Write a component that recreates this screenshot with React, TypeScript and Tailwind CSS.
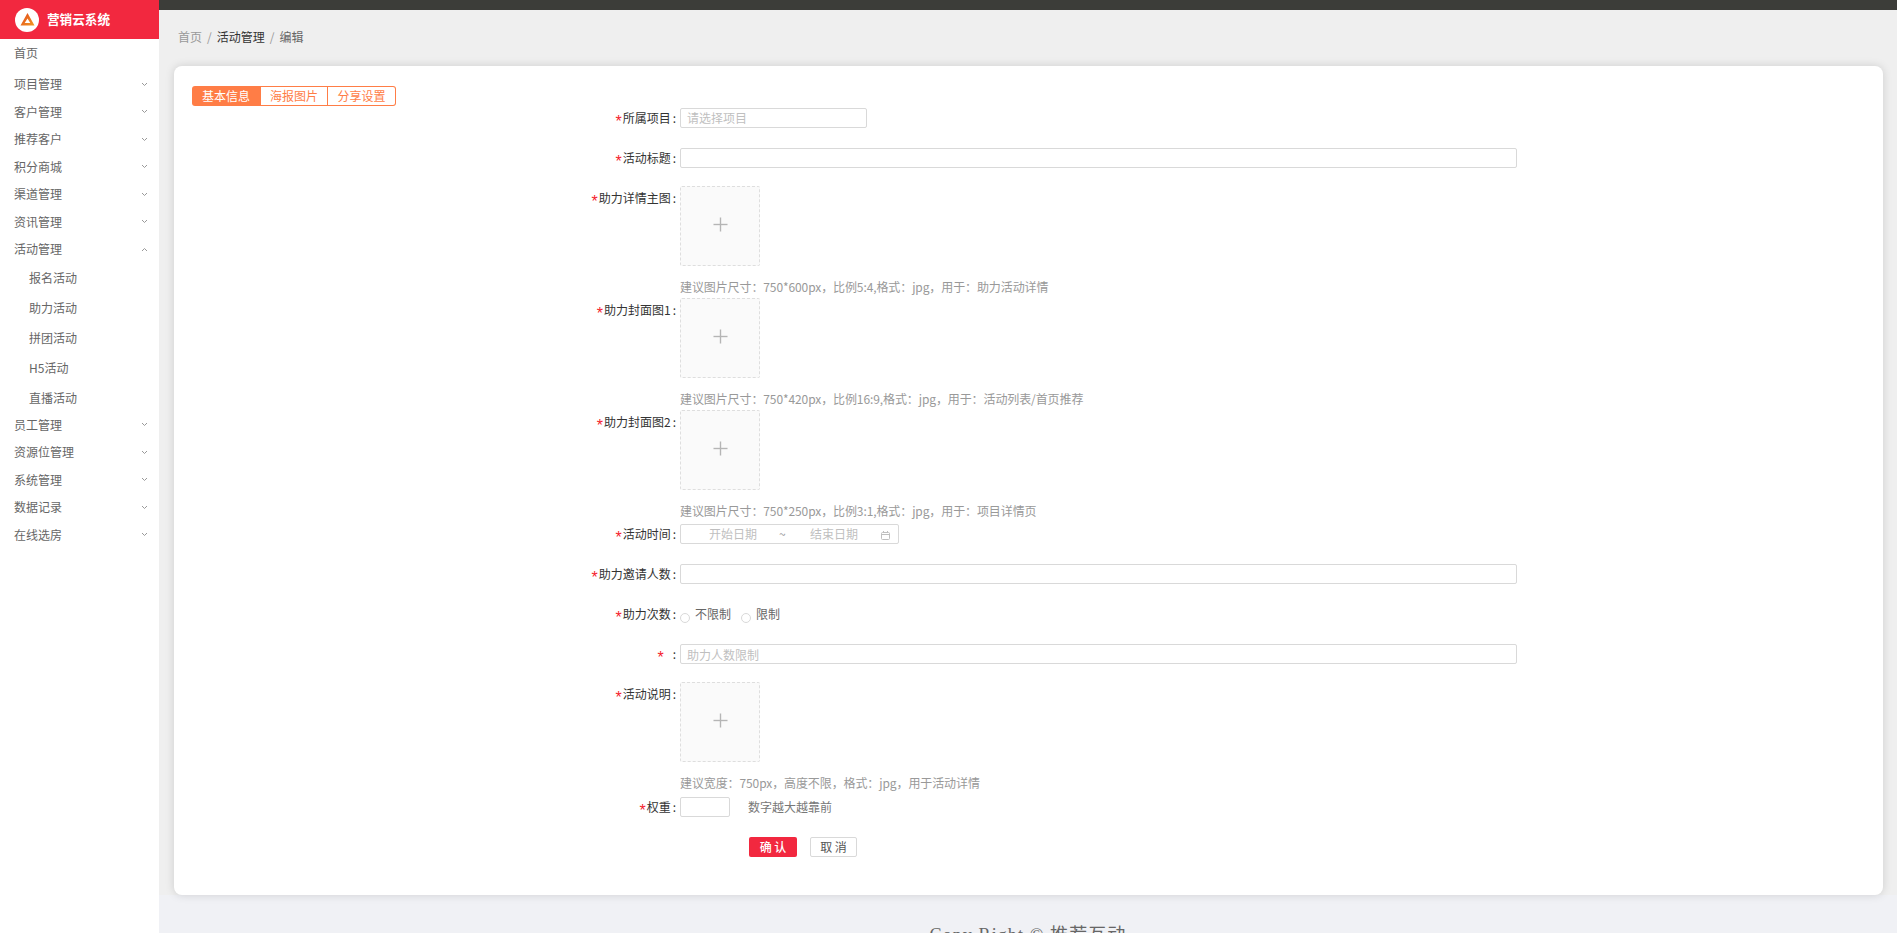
import React from 'react';

const Chevron = ({ up = false }: { up?: boolean }) => (
  <svg width="7" height="5" viewBox="0 0 7 5" className="shrink-0 mr-[11px]" fill="none" stroke="#999" strokeWidth="1">
    {up ? <polyline points="1,4 3.5,1.5 6,4" /> : <polyline points="1,1 3.5,3.5 6,1" />}
  </svg>
);

const MenuItem = ({ text, up }: { text: string; up?: boolean }) => (
  <div className="h-[27.5px] flex items-center justify-between pl-[14px] text-[#666]">
    <span>{text}</span>
    <Chevron up={up} />
  </div>
);

const SubItem = ({ text }: { text: string }) => (
  <div className="h-[30px] flex items-center pl-[29px] text-[#666]">{text}</div>
);

const Star = ({ className }: { className?: string }) => (
  <span className={`text-[#f5222d] text-[16px] leading-none relative top-[4px] [font-family:'Liberation_Sans',sans-serif] ${className ?? ''}`}>*</span>
);

const Label = ({ text, tall }: { text: string; tall?: boolean }) => (
  <div className={`w-[106px] shrink-0 pr-[4px] text-right text-[#333] whitespace-nowrap ${tall ? 'leading-[24px]' : 'leading-[20px]'}`}>
    <Star className="mr-[1px]" />
    {text}
    <span className="ml-[2px]">:</span>
  </div>
);

const Upload = () => (
  <div className="w-[80px] h-[80px] pb-[3px] border border-dashed border-[#dedede] rounded-[2px] bg-[#fafafa] flex items-center justify-center">
    <svg width="15" height="15" viewBox="0 0 15 15" stroke="#b5b5b5" strokeWidth="1.4">
      <line x1="0.5" y1="7.5" x2="14.5" y2="7.5" />
      <line x1="7.5" y1="0.5" x2="7.5" y2="14.5" />
    </svg>
  </div>
);

const UploadBlock = ({ label, hint, className }: { label: string; hint: string; className?: string }) => (
  <div className={`flex items-start ${className ?? ''}`}>
    <Label text={label} tall />
    <div className="w-[837px]">
      <Upload />
      <div className="mt-[10px] leading-[22px] text-[#999] tracking-[-0.1px] whitespace-nowrap">{hint}</div>
    </div>
  </div>
);

const Box = ({ className, placeholder }: { className: string; placeholder?: string }) => (
  <div className={`h-5 border border-[#d9d9d9] rounded-[2px] bg-white flex items-center pl-[6px] text-[#bfbfbf] ${className}`}>
    {placeholder}
  </div>
);

export default function App() {
  return (
    <div className="flex h-[933px] w-full overflow-hidden text-xs [font-family:'Noto_Sans_CJK_SC',sans-serif]">
      <aside className="w-[159px] shrink-0 bg-white">
        <div className="h-[39px] bg-[#f2283f] flex items-center pl-[15px]">
          <svg width="24" height="24" viewBox="0 0 24 24" className="shrink-0">
            <defs>
              <linearGradient id="lg" x1="0" y1="0" x2="1" y2="1">
                <stop offset="0" stopColor="#e0441c" />
                <stop offset="1" stopColor="#f39a22" />
              </linearGradient>
            </defs>
            <circle cx="12" cy="12" r="12" fill="#fff" />
            <path d="M12.5 5 L19.5 17.5 H5.5 Z M12.5 10.5 L9.7 15 H15.3 Z" fill="url(#lg)" fillRule="evenodd" />
          </svg>
          <span className="ml-[8px] text-[12.6px] font-bold text-white whitespace-nowrap">营销云系统</span>
        </div>
        <div className="h-[28px] mb-[3.5px] flex items-center pl-[14px] text-[#666]">首页</div>
        <MenuItem text="项目管理" />
        <MenuItem text="客户管理" />
        <MenuItem text="推荐客户" />
        <MenuItem text="积分商城" />
        <MenuItem text="渠道管理" />
        <MenuItem text="资讯管理" />
        <MenuItem text="活动管理" up />
        <SubItem text="报名活动" />
        <SubItem text="助力活动" />
        <SubItem text="拼团活动" />
        <SubItem text="H5活动" />
        <SubItem text="直播活动" />
        <div className="-mt-[2px]">
          <MenuItem text="员工管理" />
          <MenuItem text="资源位管理" />
          <MenuItem text="系统管理" />
          <MenuItem text="数据记录" />
          <MenuItem text="在线选房" />
        </div>
      </aside>

      <main className="flex-1 min-w-0 flex flex-col bg-[#f0f1f5]">
        <div className="h-[10px] bg-[#3c3d39] shrink-0" />
        <div className="bg-[#efefef] pl-[15px] pr-[14px]">
          <div className="h-[56px] flex items-center pl-[4px] pb-[2px] gap-[5px]">
            <span className="text-[#999]">首页</span>
            <span className="text-[#999]">/</span>
            <span className="text-[#333]">活动管理</span>
            <span className="text-[#999]">/</span>
            <span className="text-[#666]">编辑</span>
          </div>
          <div className="bg-white rounded-[8px] shadow-[0_0_10px_rgba(0,0,0,0.14)] pt-[20px] pl-[18px] pb-[38px]">
            <div className="flex h-5 w-[204px] text-[#ff7d46]">
              <div className="w-[68px] bg-[#ff7d46] text-white rounded-l-[3px] flex items-center justify-center">基本信息</div>
              <div className="w-[68px] border border-[#ff7d46] flex items-center justify-center">海报图片</div>
              <div className="w-[68px] border border-l-0 border-[#ff7d46] rounded-r-[3px] flex items-center justify-center">分享设置</div>
            </div>

            <div className="mt-[2px] ml-[382px] flex flex-col">
              <div className="flex items-start mb-5">
                <Label text="所属项目" />
                <Box className="w-[187px]" placeholder="请选择项目" />
              </div>
              <div className="flex items-start mb-[18px]">
                <Label text="活动标题" />
                <Box className="w-[837px]" />
              </div>
              <UploadBlock label="助力详情主图" hint="建议图片尺寸：750*600px，比例5:4,格式：jpg，用于：助力活动详情" />
              <UploadBlock label="助力封面图1" hint="建议图片尺寸：750*420px，比例16:9,格式：jpg，用于：活动列表/首页推荐" />
              <UploadBlock label="助力封面图2" hint="建议图片尺寸：750*250px，比例3:1,格式：jpg，用于：项目详情页" className="mb-[2px]" />
              <div className="flex items-start mb-5">
                <Label text="活动时间" />
                <div className="w-[219px] h-5 border border-[#d9d9d9] rounded-[2px] flex items-center text-[#bfbfbf]">
                  <span className="ml-[28px] w-[48px] whitespace-nowrap">开始日期</span>
                  <span className="ml-[22px] w-[8px] text-[#999]">~</span>
                  <span className="ml-[23px] w-[48px] whitespace-nowrap">结束日期</span>
                  <svg width="9" height="9" viewBox="0 0 9 9" fill="none" stroke="#bfbfbf" strokeWidth="1" className="ml-[23px] mt-[2px]">
                    <rect x="0.5" y="1.5" width="8" height="7" rx="1" />
                    <line x1="0.5" y1="3.5" x2="8.5" y2="3.5" />
                    <line x1="2.5" y1="0" x2="2.5" y2="1.5" />
                    <line x1="6.5" y1="0" x2="6.5" y2="1.5" />
                  </svg>
                </div>
              </div>
              <div className="flex items-start mb-5">
                <Label text="助力邀请人数" />
                <Box className="w-[837px]" />
              </div>
              <div className="flex items-start mb-5">
                <Label text="助力次数" />
                <div className="flex h-5 items-center text-[#666]">
                  <span className="w-[10px] h-[10px] rounded-full border border-[#d9d9d9] mt-[7px]" />
                  <span className="ml-[5px]">不限制</span>
                  <span className="w-[10px] h-[10px] rounded-full border border-[#d9d9d9] mt-[7px] ml-[10px]" />
                  <span className="ml-[5px]">限制</span>
                </div>
              </div>
              <div className="flex items-start mb-[18px]">
                <div className="w-[106px] shrink-0 pr-[4px] text-right text-[#333] leading-[20px] whitespace-nowrap">
                  <Star className="mr-[8px]" />
                  <span className="ml-[1px]">:</span>
                </div>
                <Box className="w-[837px] pt-[1px]" placeholder="助力人数限制" />
              </div>
              <UploadBlock label="活动说明" hint="建议宽度：750px，高度不限，格式：jpg，用于活动详情" className="mb-[3px]" />
              <div className="flex items-start mb-5">
                <Label text="权重" />
                <Box className="w-[50px]" />
                <span className="ml-[18px] leading-[20px] text-[#777] whitespace-nowrap">数字越大越靠前</span>
              </div>
              <div className="flex pl-[175px] gap-[13px]">
                <div className="w-[48px] h-5 rounded-[2px] bg-[#f2283f] text-white font-medium flex items-center justify-center">确 认</div>
                <div className="w-[47px] h-5 rounded-[2px] border border-[#d9d9d9] text-[#555] flex items-center justify-center">取 消</div>
              </div>
            </div>
          </div>
        </div>
        <div className="pt-[28px] text-center text-[18px] tracking-[1.1px] text-[#666] whitespace-nowrap [font-family:'Liberation_Serif','Noto_Sans_CJK_SC',serif]">
          Copy Right © 推荐互动
        </div>
      </main>
    </div>
  );
}
